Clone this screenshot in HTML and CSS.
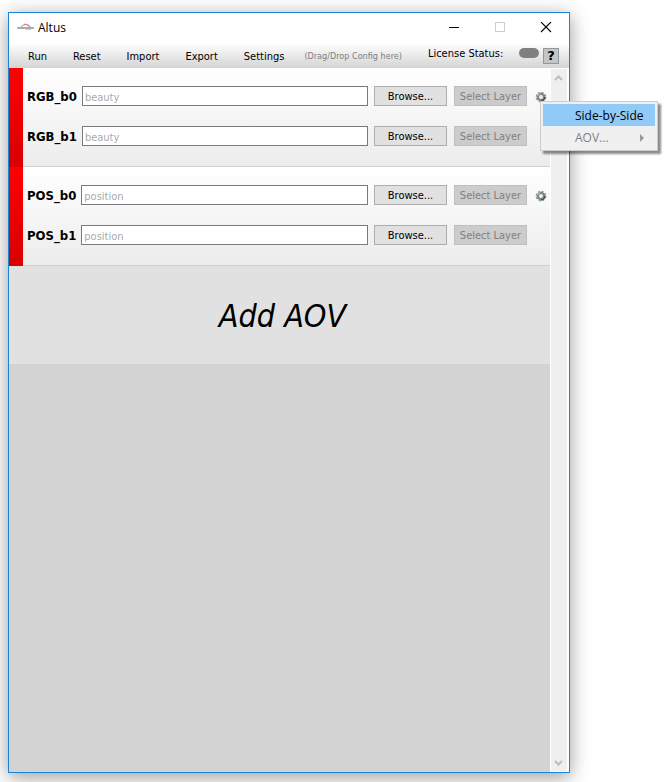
FILE: index.html
```html
<!DOCTYPE html>
<html lang="en">
<head>
<meta charset="utf-8">
<title>Altus</title>
<link rel="stylesheet" href="styles.css">
</head>
<body>
<svg class="symbols" aria-hidden="true">
  <symbol id="gear" viewBox="0 0 12 12">
    <circle cx="6" cy="6" r="4.600" fill="none" stroke="#939c9c" stroke-width="1.600" stroke-dasharray="2.200 1.400"/>
    <circle cx="6" cy="6" r="3.100" fill="none" stroke="#7d8787" stroke-width="2.400"/>
    <path d="M6 9.800A3.800 3.800 0 0 0 9.800 6" fill="none" stroke="#4a5353" stroke-width="1.600"/>
    <path d="M2.600 5A3.600 3.600 0 0 1 5 2.600" fill="none" stroke="#a9b3b3" stroke-width="1.200"/>
    <circle cx="6" cy="6" r="1.500" fill="#e4e8e8"/>
  </symbol>
</svg>
<main class="window">
  <header class="titlebar">
    <svg class="logo" viewBox="0 0 17 10" aria-hidden="true">
      <path d="M4 4Q5.500 2 8 1.500" fill="none" stroke="#8ee08e" stroke-width="1.300"/>
      <path d="M7 1.500Q9 1 11 2" fill="none" stroke="#f07878" stroke-width="1.300"/>
      <path d="M10.500 1.800Q12.500 2.800 13 4" fill="none" stroke="#8f8fe8" stroke-width="1.300"/>
      <path d="M0 5H17" stroke="#bbb" stroke-width="2"/>
      <path d="M1 5H16" stroke="#888" stroke-width="1" stroke-dasharray="1.500 .7"/>
      <path d="M9 6.500H14" stroke="#ccc" stroke-width="1"/>
    </svg>
    <h1 class="title">Altus</h1>
    <div class="controls">
      <button class="control" aria-label="Minimize"><svg viewBox="0 0 12 12"><path d="M1 5.500H11" stroke="#000"/></svg></button>
      <button class="control" aria-label="Maximize" disabled><svg viewBox="0 0 12 12"><path d="M1.500 .5H10.500V9.500H1.500Z" fill="none" stroke="#ccc"/></svg></button>
      <button class="control" aria-label="Close"><svg viewBox="0 0 12 12"><path d="M1 0L11 10M11 0L1 10" stroke="#000" stroke-width="1.100"/></svg></button>
    </div>
  </header>
  <nav class="toolbar">
    <button class="tool">Run</button>
    <button class="tool">Reset</button>
    <button class="tool">Import</button>
    <button class="tool">Export</button>
    <button class="tool">Settings</button>
    <span class="hint">(Drag/Drop Config here)</span>
    <span class="license">License Status:</span>
    <span class="lamp"></span>
    <button class="help">?</button>
  </nav>
  <div class="body">
    <div class="list">
      <section class="layer">
        <div class="row">
          <label class="name" for="rgb0">RGB_b0</label>
          <input class="path" id="rgb0" type="text" placeholder="beauty">
          <button class="button">Browse...</button>
          <button class="button" disabled>Select Layer</button>
          <div class="options">
            <button class="gear" aria-label="Layer options"><svg><use href="#gear"/></svg></button>
            <div class="menu" role="menu">
              <button class="item active" role="menuitem">Side-by-Side</button>
              <button class="item" role="menuitem" disabled>AOV...<svg class="arrow" viewBox="0 0 4 8"><path d="M0 0L4 4L0 8Z" fill="#999"/></svg></button>
            </div>
          </div>
        </div>
        <div class="row">
          <label class="name" for="rgb1">RGB_b1</label>
          <input class="path" id="rgb1" type="text" placeholder="beauty">
          <button class="button">Browse...</button>
          <button class="button" disabled>Select Layer</button>
          <div class="options"></div>
        </div>
      </section>
      <section class="layer">
        <div class="row">
          <label class="name" for="pos0">POS_b0</label>
          <input class="path" id="pos0" type="text" placeholder="position">
          <button class="button">Browse...</button>
          <button class="button" disabled>Select Layer</button>
          <div class="options">
            <button class="gear" aria-label="Layer options"><svg><use href="#gear"/></svg></button>
          </div>
        </div>
        <div class="row">
          <label class="name" for="pos1">POS_b1</label>
          <input class="path" id="pos1" type="text" placeholder="position">
          <button class="button">Browse...</button>
          <button class="button" disabled>Select Layer</button>
          <div class="options"></div>
        </div>
      </section>
      <button class="add">Add AOV</button>
    </div>
    <div class="scrollbar" aria-hidden="true">
      <svg viewBox="0 0 9 6"><path d="M1 5L4.500 1.500L8 5" fill="none" stroke="#bdbdbd" stroke-width="2"/></svg>
      <svg viewBox="0 0 9 6"><path d="M1 1L4.500 4.500L8 1" fill="none" stroke="#bdbdbd" stroke-width="2"/></svg>
    </div>
  </div>
</main>
</body>
</html>
```
FILE: styles.css
```css
* {
  box-sizing: border-box;
}

body {
  margin: 0;
  height: 100vh;
  padding: 12px 101px 9px 8px;
  background: #fff;
  color: #000;
  font: 11px/14px "DejaVu Sans Condensed", "DejaVu Sans", sans-serif;
  overflow: hidden;
}

button,
input {
  margin: 0;
  padding: 0;
  border: 0;
  background: none;
  color: inherit;
  font: inherit;
}

svg {
  display: block;
}

.symbols {
  position: absolute;
  width: 0;
  height: 0;
}

.window {
  display: flex;
  flex-direction: column;
  height: 100%;
  border: 1px solid #1883d7;
  background: #fff;
  box-shadow: 0 4px 18px rgba(0, 0, 0, 0.4);
}

.titlebar {
  display: flex;
  align-items: center;
  height: 30px;
  padding: 0 0 0 8px;
}

.logo {
  width: 17px;
  height: 10px;
}

.title {
  margin: 0 auto 0 4px;
  font: 12px/16px "Open Sans", "Noto Sans", sans-serif;
}

.controls {
  display: flex;
}

.control {
  display: flex;
  align-items: center;
  justify-content: center;
  width: 46px;
  height: 28px;
}

.control svg {
  width: 12px;
  height: 12px;
}

.toolbar {
  display: flex;
  align-items: center;
  gap: 26px;
  height: 25px;
  padding: 0 10px 0 19px;
  background: linear-gradient(#fff, #d4d4d4);
}

.tool {
  padding-top: 3px;
}

.hint {
  margin: 0 auto 0 -6px;
  color: #808080;
  font-size: 9px;
  white-space: nowrap;
}

.license {
  padding-bottom: 4px;
  white-space: nowrap;
}

.lamp {
  width: 20px;
  height: 10px;
  margin: 0 -22px 6px -10px;
  border-radius: 5px;
  background: #808080;
}

.help {
  width: 16px;
  height: 16px;
  border: 1px solid #8e9a9e;
  background: #c3c5c6;
  font: bold 13px/14px "DejaVu Sans", sans-serif;
}

.body {
  display: flex;
  flex: 1;
  min-height: 0;
}

.list {
  flex: 1;
  background: #d3d3d3;
}

.layer {
  display: grid;
  gap: 20px;
  padding: 18px 3px 21px 18px;
  background:
    linear-gradient(#f00, #d80000) left / 14px 100% no-repeat,
    linear-gradient(#d0d0d0, #d0d0d0) bottom / 100% 1px no-repeat,
    linear-gradient(#fff, #ececec);
}

.row {
  display: flex;
  align-items: center;
  height: 20px;
}

.name {
  margin-right: 5px;
  padding-top: 2px;
  font-size: 13px;
  font-weight: bold;
}

.path {
  flex: 1;
  min-width: 0;
  height: 20px;
  margin-right: 6px;
  padding: 2px 2px 0;
  border: 1px solid #7a7a7a;
  background: #fff;
}

.path::placeholder {
  color: #aaa;
  opacity: 1;
}

.button {
  width: 73px;
  height: 20px;
  margin-right: 7px;
  padding-top: 2px;
  border: 1px solid #adadad;
  background: #e1e1e1;
  white-space: nowrap;
}

.button:disabled {
  border-color: #bfbfbf;
  background: #ccc;
  color: #808080;
}

.options {
  position: relative;
  width: 13px;
}

.gear {
  display: block;
  padding: 2px 0 0 1px;
}

.gear svg {
  width: 12px;
  height: 12px;
}

.menu {
  position: absolute;
  z-index: 1;
  top: 12px;
  left: 6px;
  width: 118px;
  padding: 2px;
  border: 1px solid #ccc;
  background: #f0f0f0;
  box-shadow: 3px 3px 2px rgba(0, 0, 0, 0.45);
}

.item {
  display: flex;
  align-items: center;
  justify-content: space-between;
  width: 100%;
  height: 22px;
  padding: 2px 11px 0 32px;
  font: 12px/16px "Open Sans", "Noto Sans", sans-serif;
  white-space: nowrap;
}

.item:disabled {
  color: #808080;
}

.active {
  background: #91c9f7;
}

.arrow {
  width: 4px;
  height: 8px;
}

.add {
  display: block;
  width: 100%;
  height: 98px;
  padding: 2px 0 0 6px;
  background: #e1e1e1;
  font: italic 32px/40px "DejaVu Sans Condensed", "DejaVu Sans", sans-serif;
}

.scrollbar {
  display: flex;
  flex-direction: column;
  align-items: center;
  justify-content: space-between;
  width: 19px;
  padding: 6px 2px 5px 0;
  border: solid #fff;
  border-width: 1px 2px 1px 1px;
  background: #efefef;
}

.scrollbar svg {
  width: 9px;
  height: 6px;
}
```
